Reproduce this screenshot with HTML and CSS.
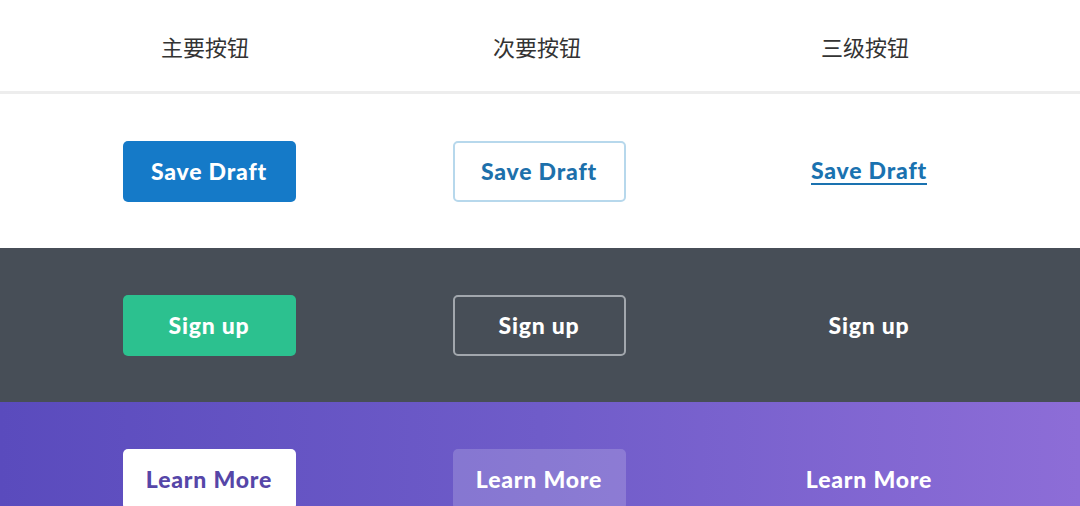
FILE: index.html
```html
<!DOCTYPE html>
<html lang="zh">
<head>
<meta charset="UTF-8">
<meta name="viewport" content="width=device-width, initial-scale=1.0">
<title>Buttons</title>
<link rel="stylesheet" href="styles.css">
</head>
<body>
  <header class="heads">
    <div class="cell">主要按钮</div>
    <div class="cell">次要按钮</div>
    <div class="cell">三级按钮</div>
  </header>

  <section class="row row-light">
    <div class="cell"><a class="btn btn-blue" href="#">Save Draft</a></div>
    <div class="cell"><a class="btn btn-blue-outline" href="#">Save Draft</a></div>
    <div class="cell"><a class="link link-blue" href="#">Save Draft</a></div>
  </section>

  <section class="row row-dark">
    <div class="cell"><a class="btn btn-green" href="#">Sign up</a></div>
    <div class="cell"><a class="btn btn-ghost" href="#">Sign up</a></div>
    <div class="cell"><a class="link link-white" href="#">Sign up</a></div>
  </section>

  <section class="row row-purple">
    <div class="cell"><a class="btn btn-white" href="#">Learn More</a></div>
    <div class="cell"><a class="btn btn-tint" href="#">Learn More</a></div>
    <div class="cell"><a class="link link-white" href="#">Learn More</a></div>
  </section>
</body>
</html>
```

FILE: styles.css
```css
/* button showcase */
body {
  margin: 0;
  padding: 0;
  font-family: Lato, "Open Sans", Arial, sans-serif;
  background-color: #fff;
  overflow: hidden;
}

.heads,
.row {
  display: grid;
  align-items: center;
}

.cell {
  display: flex;
  justify-content: center;
  align-items: center;
}

.heads {
  grid-template-columns: 334px 330px 326px;
  padding-left: 38px;
  height: 91px;
  border-bottom: 3px solid #ededed;
  font-family: "Noto Sans CJK SC", sans-serif;
  font-size: 22px;
  color: #333;
}

.row {
  grid-template-columns: 330px 330px 330px;
  padding-left: 44px;
  height: 154px;
}

.row-light {
  background-color: #fff;
}

.row-dark {
  background-color: #474e57;
}

.row-purple {
  background: linear-gradient(90deg, #5a4bbd 0%, #6f5cc9 50%, #8d6dd7 100%);
}

.btn {
  box-sizing: border-box;
  width: 173px;
  height: 61px;
  display: flex;
  justify-content: center;
  align-items: center;
  border-radius: 5px;
  font-size: 23px;
  font-weight: 900;
  letter-spacing: 0.8px;
  text-decoration: none;
  color: white;
}

.btn-blue {
  background-color: #157ac8;
}

.btn-blue-outline {
  border: 2px solid #b7d8ec;
  color: #1d70ab;
}

.btn-green {
  background-color: #2cc18f;
}

.btn-ghost {
  border: 2px solid #a2a7ad;
}

.btn-white {
  background-color: #fff;
  color: #5646a8;
}

.btn-tint {
  background-color: rgba(255, 255, 255, 0.18);
}

.link {
  font-size: 23px;
  font-weight: 900;
  letter-spacing: 0.8px;
  text-decoration: none;
  color: white;
}

.link-blue {
  color: #1a72b0;
  border-bottom: 2px solid #1a72b0;
  line-height: 25px;
}
```
